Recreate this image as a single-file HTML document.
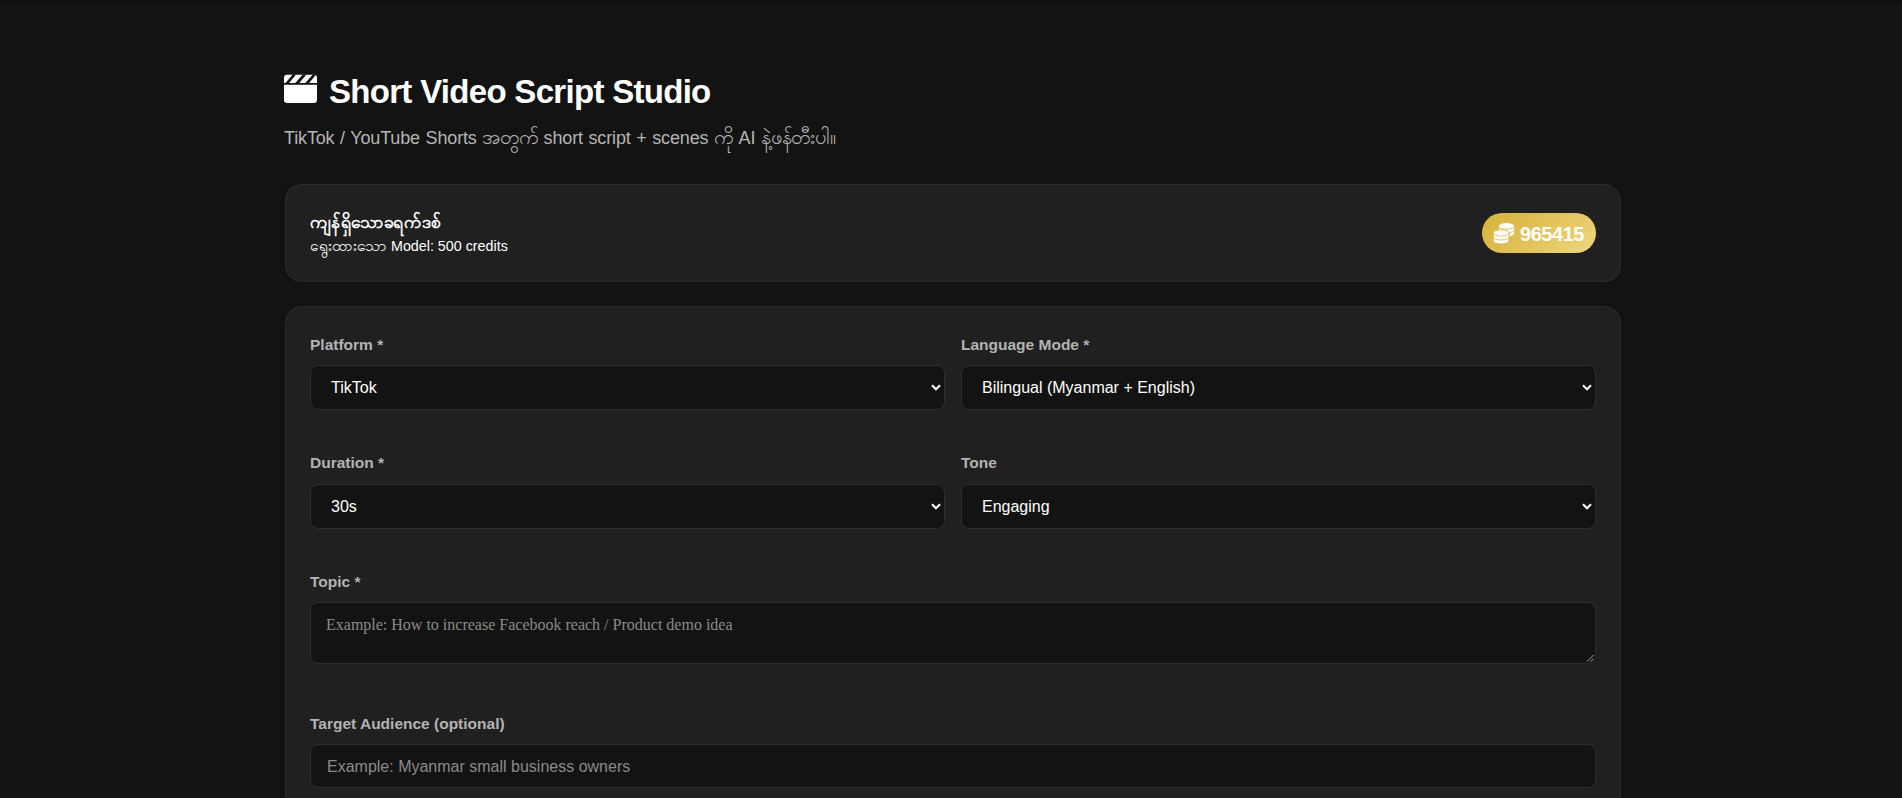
<!DOCTYPE html>
<html><head><meta charset="utf-8">
<style>
*{box-sizing:border-box;margin:0;padding:0}
html,body{width:1902px;height:798px;overflow:hidden;background:#131313;font-family:"Liberation Sans",sans-serif;color:#fff}
.topshade{position:absolute;left:0;top:0;width:1902px;height:6px;background:linear-gradient(#0d0d0d,rgba(19,19,19,0))}
.abs{position:absolute;white-space:nowrap}
.title{left:329px;top:72px;font-size:33px;font-weight:bold;line-height:40px;letter-spacing:-0.7px;color:#fff}
.sub{left:284px;top:126px;font-size:18px;letter-spacing:-0.15px;word-spacing:0.8px;line-height:22px;color:#b5b5b5}
.my{font-size:20.2px}
.card{position:absolute;left:285px;width:1336px;background:#202020;border:1px solid #2c2c2c;border-radius:16px;box-shadow:0 0 3px rgba(0,0,0,.35)}
.label{position:absolute;left:310px;font-size:15.5px;font-weight:bold;color:#b3b3b3;line-height:20px;white-space:nowrap}
.field{position:absolute;background:#131313;border:1px solid #2e2e2e;border-radius:8px}
.ftext{position:absolute;left:20px;font-size:16px;color:#fff;line-height:20px;white-space:nowrap}
.chev{position:absolute;right:3px;width:10px;height:7px}
.grip{position:absolute;right:1px;bottom:1px}
</style></head><body>
<div class="topshade"></div>
<!-- clapper icon -->
<svg class="abs" style="left:284px;top:74px" width="34" height="30" viewBox="0 0 34 30">
  <path d="M0 9 V3.8 Q0 0.8 3 0.8 H30 Q33 0.8 33 3.8 V9 Z" fill="#fff"/>
  <path d="M1.3 9.2 L4.9 9.2 L12.1 0.6 L8.7 0.6 Z M11.1 9.2 L15.1 9.2 L22.4 0.6 L18.7 0.6 Z M21.1 9.2 L24.9 9.2 L32.2 0.6 L28.8 0.6 Z" fill="#131313"/>
  <path d="M0 10.8 H33 V25.8 Q33 29 29.8 29 H3.2 Q0 29 0 25.8 Z" fill="#fff"/>
</svg>
<div class="abs title">Short Video Script Studio</div>
<div class="abs sub">TikTok / YouTube Shorts <span class="my">အတွက်</span> short script + scenes <span class="my">ကို</span> AI <span class="my">နဲ့ဖန်တီးပါ။</span></div>

<div class="card" style="top:184px;height:98px"></div>
<div class="abs" style="left:310px;top:211px;font-size:16.5px;line-height:22px;color:#fff;-webkit-text-stroke:0.6px #fff;transform-origin:0 0;transform:scaleX(1.055)">ကျန်ရှိသောခရက်ဒစ်</div>
<div class="abs" style="left:310px;top:237px;font-size:14.3px;line-height:18px;color:#fff"><span style="font-size:15.6px">ရွေးထားသော</span> Model: 500 credits</div>
<div class="abs" style="left:1482px;top:213px;width:114px;height:40px;border-radius:20px;background:linear-gradient(135deg,#d6b23a 0%,#e2c35a 50%,#eed77f 100%)">
  <svg style="position:absolute;left:11px;top:9px" width="22" height="23" viewBox="0 0 22 23">
    <g fill="#fff">
      <path d="M5.8 4 A7.7 3 0 0 1 21.2 4 V11.6 A7.7 3 0 0 1 5.8 11.6 Z"/>
      <path d="M5.8 4.2 A7.7 3 0 0 0 21.2 4.2 M5.8 7.9 A7.7 3 0 0 0 21.2 7.9" fill="none" stroke="#d9b646" stroke-width="0.8"/>
      <path d="M0.2 10.8 A7.9 3.1 0 0 1 16 10.8 V18.9 A7.9 3.1 0 0 1 0.2 18.9 Z" stroke="#d9b646" stroke-width="0.9"/>
      <path d="M0.2 11 A7.9 3.1 0 0 0 16 11 M0.2 14.9 A7.9 3.1 0 0 0 16 14.9" fill="none" stroke="#d9b646" stroke-width="0.8"/>
    </g>
  </svg>
  <div class="abs" style="left:38px;top:10px;font-size:20px;letter-spacing:-0.45px;font-weight:bold;line-height:23px;color:#fff">965415</div>
</div>

<div class="card" style="top:306px;height:600px"></div>
<div class="label" style="top:335px">Platform *</div>
<div class="label" style="top:335px;left:961px">Language Mode *</div>
<div class="field" style="left:310px;top:365px;width:635px;height:45px"><div class="ftext" style="top:12px">TikTok</div><svg class="chev" style="top:18px" width="10" height="7" viewBox="0 0 10 7"><polyline points="1,1.2 5,5.2 9,1.2" fill="none" stroke="#fff" stroke-width="2.1"/></svg></div>
<div class="field" style="left:961px;top:365px;width:635px;height:45px"><div class="ftext" style="top:12px">Bilingual (Myanmar + English)</div><svg class="chev" style="top:18px" width="10" height="7" viewBox="0 0 10 7"><polyline points="1,1.2 5,5.2 9,1.2" fill="none" stroke="#fff" stroke-width="2.1"/></svg></div>

<div class="label" style="top:453px">Duration *</div>
<div class="label" style="top:453px;left:961px">Tone</div>
<div class="field" style="left:310px;top:484px;width:635px;height:45px"><div class="ftext" style="top:12px">30s</div><svg class="chev" style="top:18px" width="10" height="7" viewBox="0 0 10 7"><polyline points="1,1.2 5,5.2 9,1.2" fill="none" stroke="#fff" stroke-width="2.1"/></svg></div>
<div class="field" style="left:961px;top:484px;width:635px;height:45px"><div class="ftext" style="top:12px">Engaging</div><svg class="chev" style="top:18px" width="10" height="7" viewBox="0 0 10 7"><polyline points="1,1.2 5,5.2 9,1.2" fill="none" stroke="#fff" stroke-width="2.1"/></svg></div>

<div class="label" style="top:572px">Topic *</div>
<div class="field" style="left:310px;top:602px;width:1286px;height:62px"><div class="ftext" style="top:12px;left:15px;font-family:'Liberation Serif',serif;color:#8a8a8a">Example: How to increase Facebook reach / Product demo idea</div><svg class="grip" width="8" height="8" viewBox="0 0 8 8"><path d="M1 7.6 L7.6 1 M4.6 7.6 L7.6 4.6" stroke="#a8a8a8" stroke-width="1"/></svg></div>

<div class="label" style="top:714px">Target Audience (optional)</div>
<div class="field" style="left:310px;top:744px;width:1286px;height:44px"><div class="ftext" style="top:12px;left:16px;color:#8a8a8a">Example: Myanmar small business owners</div></div>
</body></html>
